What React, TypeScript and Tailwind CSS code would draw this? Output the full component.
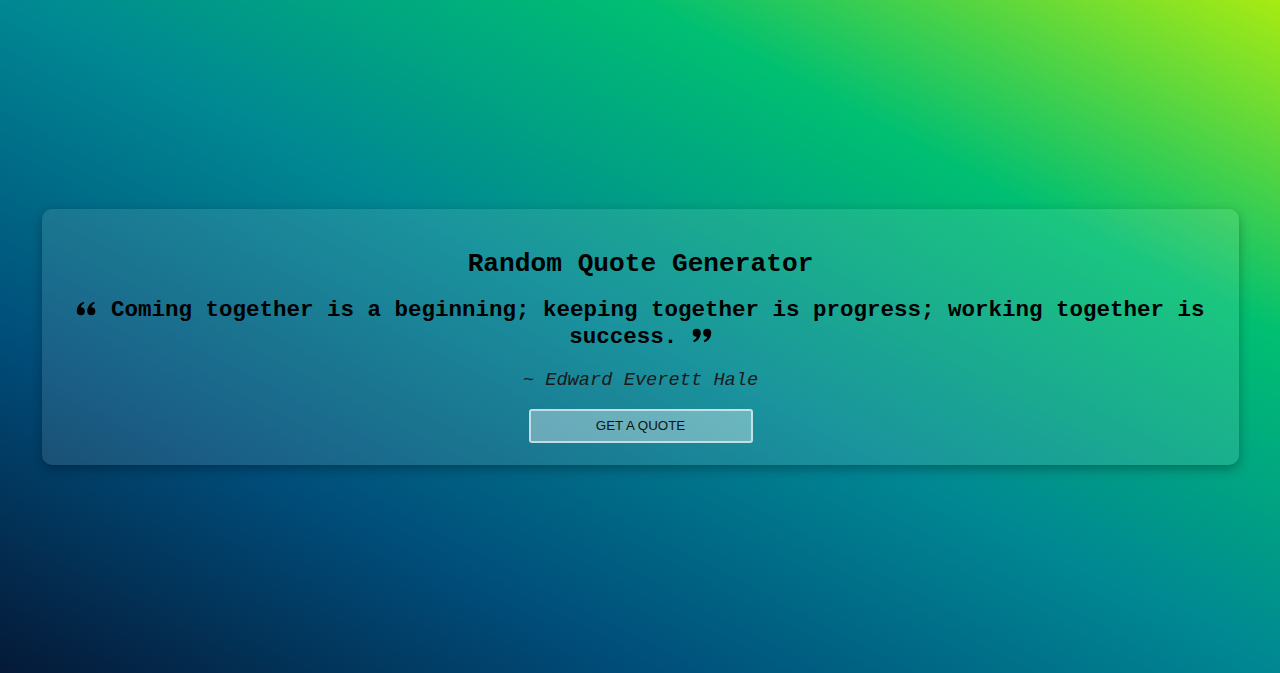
function QuoteMark({ flip = false }: { flip?: boolean }) {
  // "66" shape; flipped gives "99"
  return (
    <svg
      viewBox="0 0 20 14"
      className={"inline-block w-[21px] h-[15px] align-baseline " + (flip ? "rotate-180" : "")}
      fill="currentColor"
      aria-hidden="true"
    >
      <circle cx="4.6" cy="9.6" r="3.8" />
      <path d="M0.8 9.6C0.8 5.4 3 2.2 7.2 0.6L7.9 2.1C5.6 3.3 4.4 5 4.3 7Z" />
      <circle cx="14.6" cy="9.6" r="3.8" />
      <path d="M10.8 9.6C10.8 5.4 13 2.2 17.2 0.6L17.9 2.1C15.6 3.3 14.4 5 14.3 7Z" />
    </svg>
  );
}

export default function App() {
  const quote =
    "Coming together is a beginning; keeping together is progress; working together is success.";
  const author = "Edward Everett Hale";

  return (
    <div className="min-h-[673px] w-full flex items-center justify-center bg-[linear-gradient(to_right_top,#051937,#004d7a,#008793,#00bf72,#a8eb12)] font-['Liberation_Mono','Courier_New',monospace]">
      <div className="w-[1197px] ml-[42px] mr-[41px] rounded-[10px] bg-white/10 shadow-[0_4px_12px_rgba(0,0,0,0.3)] px-[30px] pt-[40px] pb-[22px] flex flex-col items-center text-center">
        <h1 className="text-[26.2px] leading-[30px] font-bold text-black">Random Quote Generator</h1>
        <p className="mt-[18px] text-[22.5px] leading-[27px] font-bold text-black">
          <QuoteMark /> {quote} <QuoteMark flip />
        </p>
        <p className="mt-[18px] text-[18.7px] leading-[22px] italic text-[#1a1a1a]">~ {author}</p>
        <button className="mt-[18px] w-[224px] h-[34px] rounded-[3px] border-2 border-white/60 bg-white/35 font-['Liberation_Sans',Arial,sans-serif] text-[13.33px] text-[#111]">
          GET A QUOTE
        </button>
      </div>
    </div>
  );
}
